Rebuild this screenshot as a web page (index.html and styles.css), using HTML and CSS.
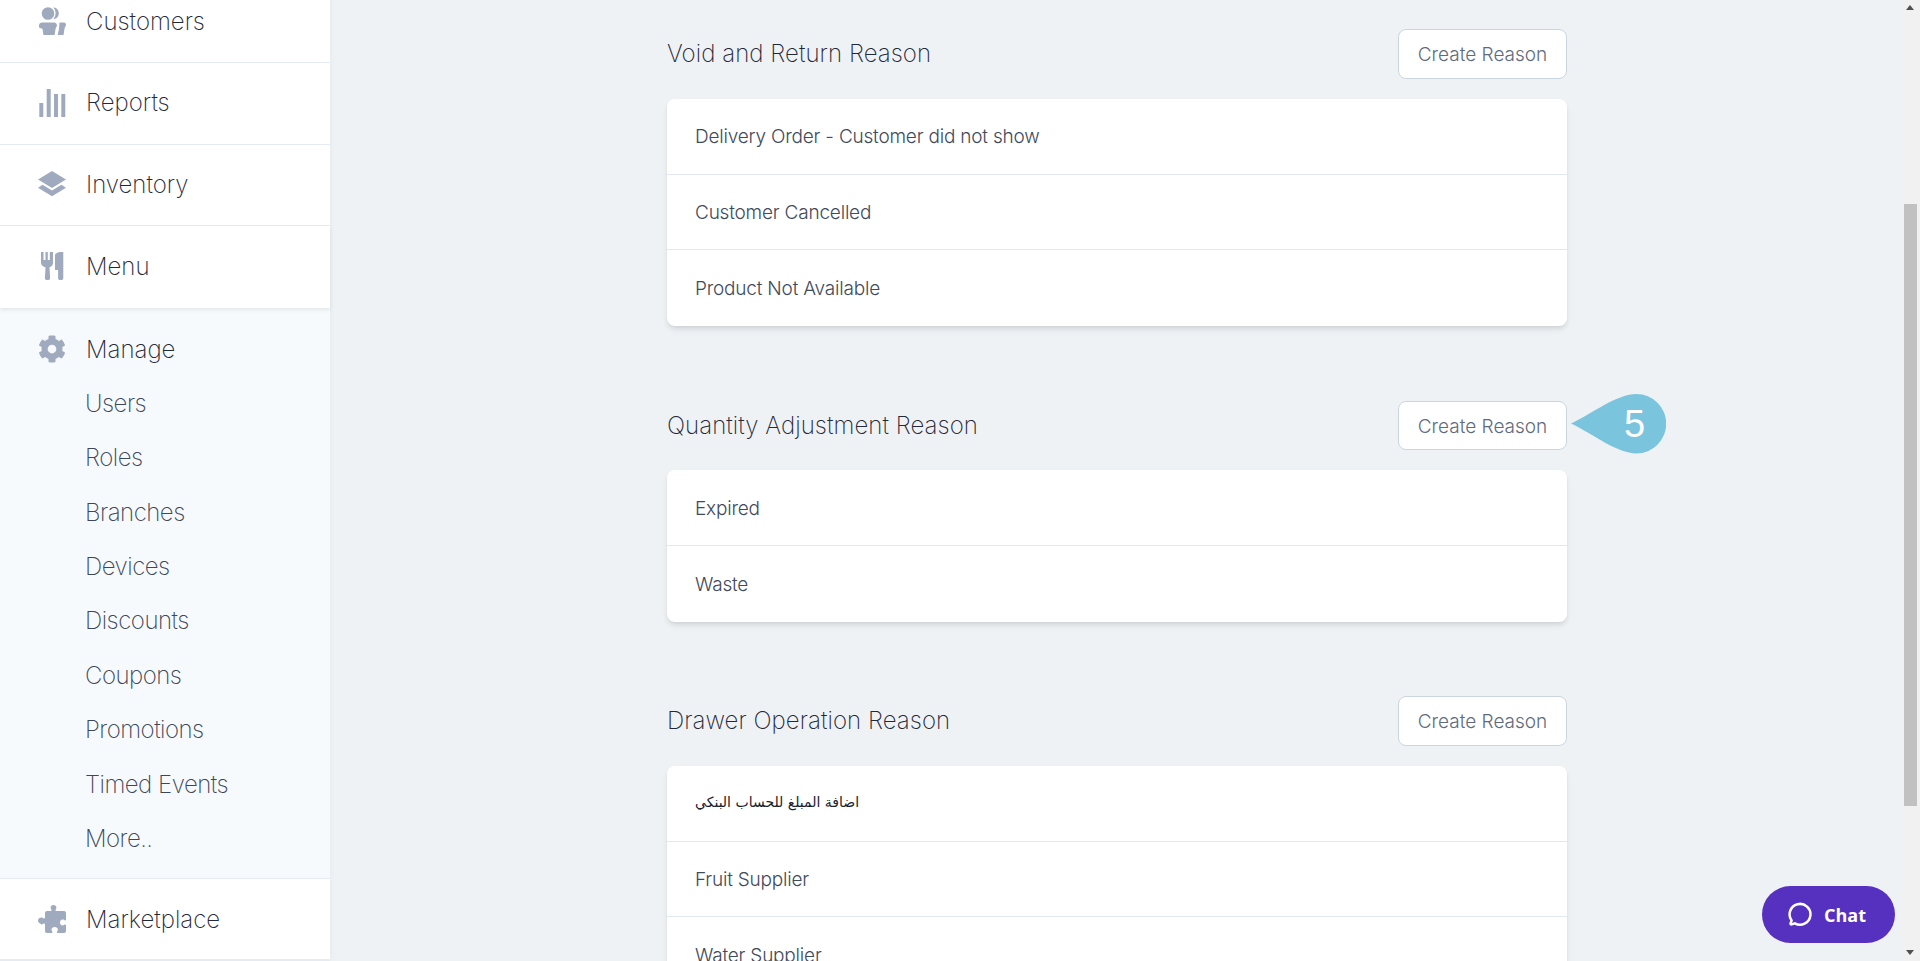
FILE: index.html
```html
<!DOCTYPE html>
<html lang="en">
<head>
<meta charset="utf-8">
<title>Manage Reasons</title>
<link rel="stylesheet" href="styles.css">
</head>
<body>
<aside class="sidebar">
  <a class="nav-item">
    <svg class="nav-icon" viewBox="0 0 28 28"><circle cx="10" cy="6.500" r="6.300"/><path d="M15.500.500c3.200 0 5.300 2.700 5.300 5.800s-2.100 5.800-5.300 5.800a9 9 0 0 0 0-11.600z"/><path d="M1 18.500c0-2 1.500-3 3-3h12c1.500 0 3 1 3 3l-1.500 3.500-1 6.500H5.500l-1-6.500L1 20.500z"/><path d="M21.500 15.500H26c1.300 0 2 1 2 2.500l-1.500 3.500-1 7h-6l1.500-6.500.500-6.500z"/></svg>
    <span>Customers</span>
  </a>
  <a class="nav-item">
    <svg class="nav-icon" viewBox="0 0 28 28"><path d="M1.300 14h4v14h-4zM8.700 0h4v28h-4zM16 5h4v23h-4zM23.300 5h4v23h-4z"/></svg>
    <span>Reports</span>
  </a>
  <a class="nav-item">
    <svg class="nav-icon" viewBox="0 0 28 28"><path d="M14 1 28 9.500 14 18 0 9.500z"/><path d="M4.500 14.800 14 20.600l9.500-5.800L28 17.800 14 26.300 0 17.800z"/></svg>
    <span>Inventory</span>
  </a>
  <a class="nav-item nav-item-last">
    <svg class="nav-icon" viewBox="0 0 28 28"><path d="M3 0h2.500v8h2V0h2.300v8h2V0H15v11c0 2.200-1.700 3.800-3.500 4.300l.6 10.700c0 1.200-1 2.200-2.600 2.200s-2.600-1-2.600-2.200l.6-10.700C5.200 14.800 3 13.200 3 11z"/><path d="M17 3c0-1.500 3-3 6-3h2.300v26c0 1.200-1 2.200-2.600 2.200s-2.600-1-2.600-2.200v-8H17z"/></svg>
    <span>Menu</span>
  </a>
  <div class="manage">
    <a class="manage-head">
      <svg class="nav-icon" viewBox="0 0 512 512"><path d="M487.400 315.700l-42.600-24.600c4.300-23.200 4.300-47 0-70.200l42.600-24.600c4.900-2.800 7.100-8.600 5.500-14-11.100-35.600-30-67.800-54.700-94.600-3.800-4.100-10-5.100-14.800-2.300L380.800 110c-17.900-15.400-38.500-27.300-60.800-35.100V25.800c0-5.600-3.900-10.500-9.400-11.700-36.700-8.200-74.300-7.800-109.200 0-5.500 1.200-9.400 6.100-9.400 11.700V75c-22.200 7.900-42.800 19.800-60.800 35.100L88.700 85.500c-4.900-2.800-11-1.900-14.800 2.300-24.700 26.700-43.600 58.900-54.700 94.600-1.700 5.400.6 11.200 5.500 14L67.300 221c-4.300 23.200-4.300 47 0 70.200l-42.600 24.600c-4.900 2.800-7.100 8.600-5.500 14 11.100 35.600 30 67.800 54.700 94.600 3.800 4.100 10 5.100 14.800 2.300l42.600-24.600c17.900 15.400 38.500 27.300 60.800 35.100v49.200c0 5.600 3.900 10.500 9.400 11.700 36.700 8.200 74.300 7.800 109.200 0 5.500-1.200 9.400-6.100 9.400-11.700v-49.200c22.200-7.900 42.800-19.800 60.800-35.100l42.600 24.600c4.900 2.800 11 1.900 14.800-2.300 24.700-26.700 43.600-58.900 54.700-94.600 1.500-5.500-.7-11.300-5.600-14.100zM256 336c-44.100 0-80-35.900-80-80s35.900-80 80-80 80 35.900 80 80-35.900 80-80 80z"/></svg>
      <span>Manage</span>
    </a>
    <a class="sub-item">Users</a>
    <a class="sub-item">Roles</a>
    <a class="sub-item">Branches</a>
    <a class="sub-item">Devices</a>
    <a class="sub-item">Discounts</a>
    <a class="sub-item">Coupons</a>
    <a class="sub-item">Promotions</a>
    <a class="sub-item">Timed Events</a>
    <a class="sub-item">More..</a>
  </div>
  <a class="nav-item nav-item-bottom">
    <svg class="nav-icon" viewBox="0 0 28 28"><path d="M9 6h3.500c1 0 1.300-.7.800-1.500C12.700 3.500 12.600 3 12.600 2.500 12.600 1 13.800 0 15.500 0s2.900 1 2.900 2.500c0 .5-.1 1-.7 2-.5.8-.2 1.500.8 1.500H26c1.200 0 2 .8 2 2v6.500c0 1-.7 1.300-1.500.8-1-.6-1.500-.7-2-.7-1.300 0-2.500 1-2.500 2.900s1.200 2.900 2.500 2.900c.5 0 1-.1 2-.7.8-.5 1.500-.2 1.500.8V26c0 1.200-.8 2-2 2h-6c-1 0-1.300-.7-.8-1.500.6-1 .7-1.500.7-2 0-1.400-1.400-2.500-3.200-2.500s-3.200 1.100-3.200 2.500c0 .5.100 1 .7 2 .5.800.2 1.500-.8 1.500H9c-1.200 0-2-.8-2-2v-6.500c0-1-.7-1.300-1.500-.8-1 .6-1.500.7-2 .7C1.500 18.400 0 17.100 0 15.500s1.500-2.900 3.500-2.900c.5 0 1 .1 2 .7.800.5 1.500.2 1.500-.8V8c0-1.200.8-2 2-2z"/></svg>
    <span>Marketplace</span>
  </a>
</aside>

<main class="content">
  <section class="reason-section">
    <header class="section-head">
      <h2 class="section-title">Void and Return Reason</h2>
      <button class="create-btn">Create Reason</button>
    </header>
    <ul class="reason-card">
      <li class="reason-row">Delivery Order - Customer did not show</li>
      <li class="reason-row">Customer Cancelled</li>
      <li class="reason-row">Product Not Available</li>
    </ul>
  </section>
  <section class="reason-section">
    <header class="section-head">
      <h2 class="section-title">Quantity Adjustment Reason</h2>
      <button class="create-btn">Create Reason</button>
      <div class="callout">
        <svg class="callout-shape" viewBox="0 0 95 60"><path d="M0 29.500C22 19 46 0 65.500 0a29.700 29.700 0 0 1 0 59.400C46 59.400 22 40 0 29.500z"/></svg>
        <span class="callout-num">5</span>
      </div>
    </header>
    <ul class="reason-card">
      <li class="reason-row">Expired</li>
      <li class="reason-row">Waste</li>
    </ul>
  </section>
  <section class="reason-section">
    <header class="section-head">
      <h2 class="section-title">Drawer Operation Reason</h2>
      <button class="create-btn">Create Reason</button>
    </header>
    <ul class="reason-card">
      <li class="reason-row reason-ar"><span dir="rtl">اضافة المبلغ للحساب البنكي</span></li>
      <li class="reason-row">Fruit Supplier</li>
      <li class="reason-row">Water Supplier</li>
    </ul>
  </section>
</main>

<div class="scrollbar">
  <span class="arrow arrow-up"></span>
  <span class="thumb"></span>
  <span class="arrow arrow-down"></span>
</div>

<button class="chat-btn">
  <svg class="chat-icon" viewBox="0 0 24 24"><path d="M4.500 21.500c-.8.200-1.300-.3-1-1l.9-2.800A10 10 0 1 1 7.500 20.500z"/></svg>
  <span>Chat</span>
</button>
</body>
</html>
```

FILE: styles.css
```css
* { box-sizing: border-box; }
html, body { margin: 0; height: 961px; overflow: hidden; }
body {
  display: flex;
  background: #eff2f5;
  font-family: Inter, "Noto Sans", sans-serif;
  font-weight: 300;
  color: #1f2937;
}
ul { list-style: none; margin: 0; padding: 0; }

.sidebar {
  flex: 0 0 330px;
  margin-top: -18.4px;
  align-self: flex-start;
  background: #fff;
  box-shadow: 0 0 6px rgba(0,0,0,.04);
}
.nav-item {
  display: flex;
  align-items: center;
  gap: 20px;
  height: 81.6px;
  padding: 0 0 1.5px 38px;
  font-size: 24px;
  font-weight: 250;
  background: #fff;
  border-bottom: 1px solid #e6eaf1;
}
.nav-item-last {
  position: relative;
  border-bottom: 0;
  box-shadow: 0 2px 4px rgba(0,0,0,.08);
}
.nav-item-bottom {
  height: 83px;
  padding: 1px 0 0 38px;
  border-top: 1px solid #e6eaf1;
  border-bottom-width: 2px;
}
.nav-icon { flex: 0 0 28px; width: 28px; height: 28px; fill: #a0aabf; }

.manage { background: #f7fafc; padding-bottom: 12.2px; }
.manage-head {
  display: flex;
  align-items: center;
  gap: 20px;
  height: 68.2px;
  padding: 14px 0 0 38px;
  font-size: 24px;
  font-weight: 250;
}
.sub-item {
  display: flex;
  align-items: center;
  height: 54.4px;
  padding-left: 85px;
  font-size: 24px;
  font-weight: 200;
  letter-spacing: -.5px;
  color: #3d4757;
}

.content {
  flex: 1;
  padding: 29.4px 0 0 337px;
  min-width: 0;
}
.reason-section { width: 900px; margin-bottom: 74.5px; }
.section-head {
  position: relative;
  display: flex;
  justify-content: space-between;
  align-items: center;
  height: 49.5px;
  margin-bottom: 20px;
}
.section-title {
  margin: 0;
  padding-bottom: 1px;
  font-size: 24px;
  font-weight: 250;
  letter-spacing: .05px;
}
.create-btn {
  width: 169px;
  height: 49.5px;
  padding: 1px 0 0;
  background: #fff;
  border: 1px solid #cbd5e0;
  border-radius: 8px;
  font: inherit;
  font-size: 19px;
  color: #5f6b7d;
}
.reason-card {
  background: #fff;
  border-radius: 8px;
  box-shadow: 0 4px 6px -1px rgba(0,0,0,.1), 0 2px 4px -1px rgba(0,0,0,.06);
}
.reason-row {
  display: flex;
  align-items: center;
  height: 75.8px;
  padding: 1px 0 0 28px;
  font-size: 19px;
  letter-spacing: -.2px;
  color: #3f4a5a;
  border-bottom: 1px solid #e2e8f0;
}
.reason-row:last-child { border-bottom: 0; }
.reason-ar {
  padding: 0 0 2px 28px;
  font-family: "DejaVu Sans", sans-serif;
  font-weight: 400;
  font-size: 14px;
  letter-spacing: 0;
  color: #1a202c;
}

.callout {
  position: absolute;
  left: 904px;
  top: -7px;
  width: 95px;
  height: 60px;
}
.callout-shape { display: block; width: 95px; height: 60px; fill: #7ac4de; }
.callout-num {
  position: absolute;
  left: 53px;
  top: 8px;
  font-family: "Liberation Sans", sans-serif;
  font-weight: 400;
  font-size: 38px;
  line-height: 44px;
  color: #fff;
}

.scrollbar {
  position: relative;
  flex: 0 0 18px;
  height: 961px;
  background: #f1f1f1;
}
.thumb {
  position: absolute;
  left: 2px;
  top: 204px;
  width: 13px;
  height: 602px;
  background: #c1c1c1;
}
.arrow { position: absolute; left: 4px; width: 0; height: 0; border: 4px solid transparent; }
.arrow-up { top: 5px; border-top: 0; border-bottom: 5px solid #505050; }
.arrow-down { top: 950px; border-bottom: 0; border-top: 5px solid #505050; }

.chat-btn {
  position: fixed;
  left: 1762px;
  top: 886px;
  display: flex;
  align-items: center;
  gap: 12px;
  width: 133px;
  height: 57px;
  padding: 0 0 0 25px;
  border: 0;
  border-radius: 29px;
  background: #5630bf;
  color: #fff;
  font-family: "Open Sans", sans-serif;
  font-weight: 700;
  font-size: 18px;
}
.chat-icon { width: 25px; height: 25px; fill: none; stroke: #fff; stroke-width: 2.400; }
```
